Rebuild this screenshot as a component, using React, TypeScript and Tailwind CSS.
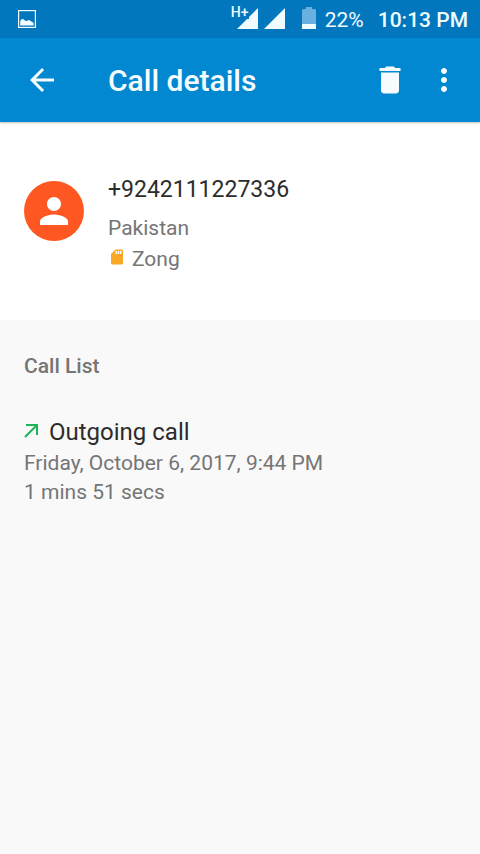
import type { ReactNode } from "react";
import {
  MdArrowBack,
  MdDelete,
  MdMoreVert,
  MdPerson,
  MdSdCard,
} from "react-icons/md";

const call = {
  number: "+9242111227336",
  country: "Pakistan",
  carrier: "Zong",
  entries: [
    {
      kind: "Outgoing call",
      date: "Friday, October 6, 2017, 9:44 PM",
      duration: "1 mins 51 secs",
    },
  ],
};

function ScreenshotIcon() {
  return (
    <svg viewBox="0 0 18 18" className="mb-0.5 size-[18px]" aria-hidden="true">
      <rect x="0.6" y="0.6" width="16.8" height="16.8" fill="none" stroke="currentColor" strokeWidth="1.2" />
      <path
        d="M2.2 15.5v-4.2l1.2-1.8 1-.8 1.4.8 1.4 1.3 1.4.3 1.4-.8 1.8-.1 1.4 1.2 1.7.8.7 1v2.3z"
        fill="currentColor"
      />
    </svg>
  );
}

function SignalIcon({ network }: { network?: string }) {
  return (
    <div className="relative">
      <svg viewBox="0 0 21 21" className="size-[21px]" aria-hidden="true">
        <path
          d={network ? "M0 21 10 11h2V9l9-9v21z" : "M0 21 21 0v21z"}
          fill="currentColor"
        />
      </svg>
      {network && (
        <span className="absolute -top-1 -left-1.5 text-sm leading-4 font-medium">
          {network}
        </span>
      )}
    </div>
  );
}

function BatteryIcon() {
  return (
    <svg viewBox="0 0 14 22" className="mb-1 h-[22px] w-[14px]" aria-hidden="true">
      <path d="M4 0h6v2h3l1 1v14H0V3l1-1h3z" fill="#67b0e0" />
      <path d="M0 17h14v5H0z" fill="currentColor" />
    </svg>
  );
}

function OutgoingIcon() {
  return (
    <svg viewBox="0 0 14 14" className="mb-0.5 size-3.5 text-[#1db35b]" aria-hidden="true">
      <path
        d="M2 1h11v10M13 1 1 13"
        fill="none"
        stroke="currentColor"
        strokeWidth="2"
      />
    </svg>
  );
}

function IconButton({ label, children }: { label: string; children: ReactNode }) {
  return (
    <button type="button" aria-label={label} className="shrink-0">
      {children}
    </button>
  );
}

function StatusBar() {
  return (
    <div className="flex h-[38px] items-center bg-[#0277bd] pt-0.5 pr-3 pl-[18px] text-[21px] leading-7 text-[#f0fcff]">
      <ScreenshotIcon />
      <div className="mb-1 ml-auto flex items-center gap-1.5">
        <SignalIcon network="H+" />
        <SignalIcon />
      </div>
      <div className="ml-[17px] flex items-center gap-[9px]">
        <BatteryIcon />
        <span>22%</span>
      </div>
      <span className="ml-3.5 font-medium">10:13 PM</span>
    </div>
  );
}

function AppBar() {
  return (
    <header className="relative flex h-[84px] items-center bg-[#0288d1] pr-[18px] pl-6 text-[#f7fdff] shadow-[0_1px_2px_rgba(0,0,0,0.25)]">
      <IconButton label="Navigate up">
        <MdArrowBack className="size-9" />
      </IconButton>
      <h1 className="ml-12 flex-1 pt-0.5 text-[30px] leading-9 font-medium">
        Call details
      </h1>
      <div className="flex gap-[18px]">
        <IconButton label="Delete">
          <MdDelete className="size-9" />
        </IconButton>
        <IconButton label="More options">
          <MdMoreVert className="size-9" />
        </IconButton>
      </div>
    </header>
  );
}

function Contact() {
  return (
    <section className="flex gap-6 bg-white px-6 pt-[50px] pb-[47px]">
      <div className="mt-[9px] flex size-[60px] shrink-0 items-center justify-center rounded-full bg-[#ff5722] text-white">
        <MdPerson className="size-[42px]" />
      </div>
      <div className="text-[21px] leading-7 text-[#757575]">
        <h2 className="text-[23px] leading-9 text-[#2c2c2c]">{call.number}</h2>
        <p className="mt-1.5">{call.country}</p>
        <p className="mt-[3px] flex items-center gap-1.5">
          <MdSdCard className="mb-1 size-[18px] text-[#f9a825]" />
          {call.carrier}
        </p>
      </div>
    </section>
  );
}

function CallList() {
  return (
    <section className="flex-1 px-6 pt-8 text-[21px] leading-[29px] text-[#757575]">
      <h2 className="font-medium">Call List</h2>
      <ul className="mt-[34px]">
        {call.entries.map((entry) => (
          <li key={entry.date}>
            <div className="flex items-center gap-[11px] text-2xl leading-[34px] text-[#2c2c2c]">
              <OutgoingIcon />
              {entry.kind}
            </div>
            <p>{entry.date}</p>
            <p>{entry.duration}</p>
          </li>
        ))}
      </ul>
    </section>
  );
}

export default function App() {
  return (
    <main className="flex min-h-screen flex-col bg-[#f9f9f9] font-[Roboto,sans-serif]">
      <StatusBar />
      <AppBar />
      <Contact />
      <CallList />
    </main>
  );
}
